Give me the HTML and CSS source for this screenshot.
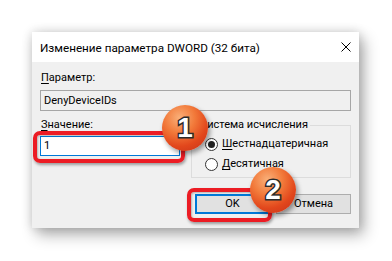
FILE: index.html
```html
<!DOCTYPE html>
<html lang="ru">
<head>
    <meta charset="UTF-8">
    <meta name="viewport" content="width=device-width, initial-scale=1.0">
    <title>Изменение параметра DWORD</title>
    <link rel="stylesheet" href="styles.css">
</head>
<body>
    <div class="dialog">
        <div class="titlebar">
            <span class="title">Изменение параметра DWORD (32 бита)</span>
            <svg class="close" width="10" height="10" viewBox="0 0 10 10">
                <path d="M0.5 0.5 L9.5 9.5 M9.5 0.5 L0.5 9.5" stroke="#000" stroke-width="1" fill="none"/>
            </svg>
        </div>

        <div class="content">
            <div class="field-label"><u>П</u>араметр:</div>
            <div class="param-box">DenyDeviceIDs</div>

            <div class="row">
                <div class="value-col">
                    <div class="field-label"><u>З</u>начение:</div>
                    <div class="value-box">1</div>
                </div>

                <fieldset class="base-group">
                    <legend>Система исчисления</legend>
                    <div class="radio-row">
                        <span class="radio checked"></span>
                        <span><u>Ш</u>естнадцатеричная</span>
                    </div>
                    <div class="radio-row">
                        <span class="radio"></span>
                        <span><u>Д</u>есятичная</span>
                    </div>
                </fieldset>
            </div>

            <div class="buttons">
                <div class="btn btn-default">OK</div>
                <div class="btn">Отмена</div>
            </div>
        </div>
    </div>

    <!-- annotation overlays -->
    <div class="highlight highlight-value"></div>
    <div class="highlight highlight-ok"></div>
    <div class="badge badge-one">1</div>
    <div class="badge badge-two">2</div>
</body>
</html>
```

FILE: styles.css
```css
body {
    margin: 0;
    padding: 0;
    width: 392px;
    height: 261px;
    background-color: #ffffff;
    font-family: Roboto, "Noto Sans", sans-serif;
    font-size: 11px;
    color: #000;
    overflow: hidden;
    position: relative;
}

u {
    text-decoration: underline;
    text-underline-offset: 2px;
}

.dialog {
    margin: 32px 0 0 32px;
    width: 327px;
    height: 196px;
    background-color: #f0f0f0;
    box-shadow: 0 0 10px rgba(0, 0, 0, 0.16), 5px 7px 14px rgba(0, 0, 0, 0.3);
    display: flex;
    flex-direction: column;
}

.titlebar {
    height: 30px;
    background-color: #ffffff;
    display: flex;
    align-items: center;
    justify-content: space-between;
    padding: 0 8px 0 8px;
}

.title {
    font-size: 11.7px;
    line-height: 16px;
    padding-top: 2px;
}

.content {
    padding: 8px 8px 0 8px;
    flex: 1;
}

.field-label {
    line-height: 16px;
    padding-left: 1px;
}

.param-box {
    margin-top: 4px;
    height: 19px;
    line-height: 19px;
    border: 1px solid #a6a6a6;
    background-color: #f0f0f0;
    padding-left: 3px;
}

.row {
    display: flex;
    gap: 11px;
    margin-top: 6px;
}

.value-col {
    width: 140px;
}

.value-box {
    margin-top: 3px;
    height: 18px;
    line-height: 18px;
    border: 1px solid #0078d7;
    background-color: #ffffff;
    padding-left: 3px;
}

.base-group {
    flex: 1;
    margin: 0;
    padding: 0 6px 5px 6px;
    border: 1px solid #dcdcdc;
    min-width: 0;
}

.base-group legend {
    padding: 0 2px;
    line-height: 16px;
}

.radio-row {
    display: flex;
    align-items: center;
    gap: 4px;
    margin-left: 7px;
    line-height: 16px;
    margin-top: 3px;
}

.radio-row + .radio-row {
    margin-top: 4px;
}

.radio {
    width: 11px;
    height: 11px;
    border: 1px solid #333;
    border-radius: 50%;
    background-color: #fff;
    display: flex;
    align-items: center;
    justify-content: center;
}

.radio.checked::after {
    content: "";
    width: 7px;
    height: 7px;
    border-radius: 50%;
    background-color: #222;
}

.buttons {
    display: flex;
    justify-content: flex-end;
    gap: 6px;
    margin-top: 16px;
}

.btn {
    width: 73px;
    height: 18px;
    line-height: 18px;
    text-align: center;
    background-color: #e1e1e1;
    border: 1px solid #adadad;
}

.btn-default {
    border: 2px solid #0078d7;
    height: 16px;
    line-height: 16px;
    width: 71px;
}

.highlight {
    position: absolute;
    border: 4px solid #ec1c24;
    border-radius: 7px;
    box-shadow: 1px 2px 3px rgba(0, 0, 0, 0.35), inset 1px 1px 2px rgba(0, 0, 0, 0.25);
}

.highlight-value {
    left: 33px;
    top: 131px;
    width: 144px;
    height: 24px;
}

.highlight-ok {
    left: 187px;
    top: 188px;
    width: 77px;
    height: 26px;
}

.badge {
    position: absolute;
    width: 46px;
    height: 46px;
    border-radius: 50%;
    background: radial-gradient(circle at 38% 28%, #f9b07a 0%, #f27a3a 35%, #e2471c 65%, #c2301a 100%);
    box-shadow: 2px 3px 5px rgba(0, 0, 0, 0.4);
    display: flex;
    align-items: center;
    justify-content: center;
    font-family: "Liberation Sans", Arial, sans-serif;
    font-weight: bold;
    font-size: 28px;
    color: #fff;
    -webkit-text-stroke: 3px #2b2b2b;
    paint-order: stroke fill;
}

.badge-one {
    left: 162px;
    top: 105px;
}

.badge-two {
    left: 250px;
    top: 167px;
}
```
